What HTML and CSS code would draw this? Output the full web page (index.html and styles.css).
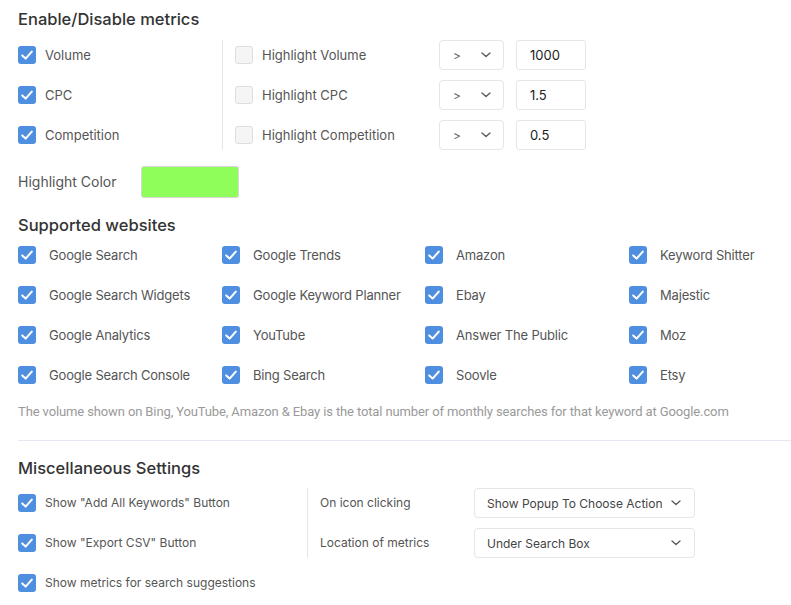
FILE: index.html
```html
<!DOCTYPE html>
<html>
<head>
<meta charset="utf-8">
<link rel="stylesheet" href="styles.css">
</head>
<body>
<div class="page">
  <h2 class="heading">Enable/Disable metrics</h2>
  <div class="metrics">
    <div class="metrics-left">
      <label class="row"><span class="cb on"><svg viewBox="0 0 18 18"><path d="M4.2 9.4 L7.6 12.6 L13.8 5.6"/></svg></span><span class="lbl">Volume</span></label>
      <label class="row"><span class="cb on"><svg viewBox="0 0 18 18"><path d="M4.2 9.4 L7.6 12.6 L13.8 5.6"/></svg></span><span class="lbl">CPC</span></label>
      <label class="row"><span class="cb on"><svg viewBox="0 0 18 18"><path d="M4.2 9.4 L7.6 12.6 L13.8 5.6"/></svg></span><span class="lbl">Competition</span></label>
    </div>
    <div class="metrics-right">
      <div class="hrow">
        <label class="hlabel"><span class="cb off"></span><span class="lbl">Highlight Volume</span></label>
        <div class="sel small"><span>&gt;</span><svg class="chev" viewBox="0 0 10 6"><path d="M1 1 L5 4.6 L9 1"/></svg></div>
        <div class="inp">1000</div>
      </div>
      <div class="hrow">
        <label class="hlabel"><span class="cb off"></span><span class="lbl">Highlight CPC</span></label>
        <div class="sel small"><span>&gt;</span><svg class="chev" viewBox="0 0 10 6"><path d="M1 1 L5 4.6 L9 1"/></svg></div>
        <div class="inp">1.5</div>
      </div>
      <div class="hrow">
        <label class="hlabel"><span class="cb off"></span><span class="lbl">Highlight Competition</span></label>
        <div class="sel small"><span>&gt;</span><svg class="chev" viewBox="0 0 10 6"><path d="M1 1 L5 4.6 L9 1"/></svg></div>
        <div class="inp">0.5</div>
      </div>
    </div>
  </div>
  <div class="color-row">
    <span class="lbl">Highlight Color</span>
    <span class="swatch"></span>
  </div>

  <h2 class="heading h-sites">Supported websites</h2>
  <div class="sites">
    <label class="site"><span class="cb on"><svg viewBox="0 0 18 18"><path d="M4.2 9.4 L7.6 12.6 L13.8 5.6"/></svg></span><span class="lbl">Google Search</span></label>
    <label class="site"><span class="cb on"><svg viewBox="0 0 18 18"><path d="M4.2 9.4 L7.6 12.6 L13.8 5.6"/></svg></span><span class="lbl">Google Trends</span></label>
    <label class="site"><span class="cb on"><svg viewBox="0 0 18 18"><path d="M4.2 9.4 L7.6 12.6 L13.8 5.6"/></svg></span><span class="lbl">Amazon</span></label>
    <label class="site"><span class="cb on"><svg viewBox="0 0 18 18"><path d="M4.2 9.4 L7.6 12.6 L13.8 5.6"/></svg></span><span class="lbl">Keyword Shitter</span></label>
    <label class="site"><span class="cb on"><svg viewBox="0 0 18 18"><path d="M4.2 9.4 L7.6 12.6 L13.8 5.6"/></svg></span><span class="lbl">Google Search Widgets</span></label>
    <label class="site"><span class="cb on"><svg viewBox="0 0 18 18"><path d="M4.2 9.4 L7.6 12.6 L13.8 5.6"/></svg></span><span class="lbl">Google Keyword Planner</span></label>
    <label class="site"><span class="cb on"><svg viewBox="0 0 18 18"><path d="M4.2 9.4 L7.6 12.6 L13.8 5.6"/></svg></span><span class="lbl">Ebay</span></label>
    <label class="site"><span class="cb on"><svg viewBox="0 0 18 18"><path d="M4.2 9.4 L7.6 12.6 L13.8 5.6"/></svg></span><span class="lbl">Majestic</span></label>
    <label class="site"><span class="cb on"><svg viewBox="0 0 18 18"><path d="M4.2 9.4 L7.6 12.6 L13.8 5.6"/></svg></span><span class="lbl">Google Analytics</span></label>
    <label class="site"><span class="cb on"><svg viewBox="0 0 18 18"><path d="M4.2 9.4 L7.6 12.6 L13.8 5.6"/></svg></span><span class="lbl">YouTube</span></label>
    <label class="site"><span class="cb on"><svg viewBox="0 0 18 18"><path d="M4.2 9.4 L7.6 12.6 L13.8 5.6"/></svg></span><span class="lbl">Answer The Public</span></label>
    <label class="site"><span class="cb on"><svg viewBox="0 0 18 18"><path d="M4.2 9.4 L7.6 12.6 L13.8 5.6"/></svg></span><span class="lbl">Moz</span></label>
    <label class="site"><span class="cb on"><svg viewBox="0 0 18 18"><path d="M4.2 9.4 L7.6 12.6 L13.8 5.6"/></svg></span><span class="lbl">Google Search Console</span></label>
    <label class="site"><span class="cb on"><svg viewBox="0 0 18 18"><path d="M4.2 9.4 L7.6 12.6 L13.8 5.6"/></svg></span><span class="lbl">Bing Search</span></label>
    <label class="site"><span class="cb on"><svg viewBox="0 0 18 18"><path d="M4.2 9.4 L7.6 12.6 L13.8 5.6"/></svg></span><span class="lbl">Soovle</span></label>
    <label class="site"><span class="cb on"><svg viewBox="0 0 18 18"><path d="M4.2 9.4 L7.6 12.6 L13.8 5.6"/></svg></span><span class="lbl">Etsy</span></label>
  </div>
  <p class="note">The volume shown on Bing, YouTube, Amazon &amp; Ebay is the total number of monthly searches for that keyword at Google.com</p>
  <hr class="divider">

  <h2 class="heading h-misc">Miscellaneous Settings</h2>
  <div class="misc">
    <div class="misc-left">
      <label class="row"><span class="cb on"><svg viewBox="0 0 18 18"><path d="M4.2 9.4 L7.6 12.6 L13.8 5.6"/></svg></span><span class="lbl">Show "Add All Keywords" Button</span></label>
      <label class="row"><span class="cb on"><svg viewBox="0 0 18 18"><path d="M4.2 9.4 L7.6 12.6 L13.8 5.6"/></svg></span><span class="lbl">Show "Export CSV" Button</span></label>
      <label class="row"><span class="cb on"><svg viewBox="0 0 18 18"><path d="M4.2 9.4 L7.6 12.6 L13.8 5.6"/></svg></span><span class="lbl">Show metrics for search suggestions</span></label>
    </div>
    <div class="misc-right">
      <div class="mrow">
        <span class="lbl mlabel">On icon clicking</span>
        <div class="sel wide"><span>Show Popup To Choose Action</span><svg class="chev" viewBox="0 0 10 6"><path d="M1 1 L5 4.6 L9 1"/></svg></div>
      </div>
      <div class="mrow">
        <span class="lbl mlabel">Location of metrics</span>
        <div class="sel wide"><span>Under Search Box</span><svg class="chev" viewBox="0 0 10 6"><path d="M1 1 L5 4.6 L9 1"/></svg></div>
      </div>
    </div>
  </div>
</div>
</body>
</html>
```

FILE: styles.css
```css
* { box-sizing: border-box; }
html, body { margin: 0; padding: 0; background: #fff; }
body {
  font-family: Inter, "Noto Sans", "Liberation Sans", sans-serif;
  font-size: 13px;
  color: #555;
  overflow: hidden;
}
.page { padding: 8px 0 0 18px; width: 791px; }
.heading {
  margin: 0 0 10px 0;
  font-size: 16.5px;
  line-height: 22px;
  font-weight: 500;
  color: #333;
}
.lbl { line-height: 18px; white-space: nowrap; }

.cb {
  display: inline-flex;
  width: 18px; height: 18px;
  border-radius: 3px;
  flex: none;
}
.cb.on { background: #4f8fe0; }
.cb.off { background: #f5f5f5; border: 1px solid #dedede; }
.cb svg { width: 18px; height: 18px; }
.cb svg path { fill: none; stroke: #fff; stroke-width: 2; stroke-linecap: round; stroke-linejoin: round; }

.metrics { display: flex; }
.metrics-left { width: 204px; display: flex; flex-direction: column; gap: 10px; }
.row { display: flex; align-items: center; gap: 9px; height: 30px; }
.metrics-right {
  border-left: 1px solid #e6e6e9;
  padding-left: 12px;
  display: flex; flex-direction: column; gap: 10px;
}
.hrow { display: flex; align-items: center; height: 30px; }
.hlabel { display: flex; align-items: center; gap: 9px; width: 204px; }

.sel {
  display: flex; align-items: center; justify-content: space-between;
  height: 30px;
  border: 1px solid #e8e4e8;
  border-radius: 4px;
  background: #fff;
  color: #444;
}
.sel.small { width: 65px; padding: 0 12px 0 13px; margin-right: 12px; font-size: 12px; color: #666; }
.sel.wide { width: 221px; padding: 0 13px 0 12px; color: #444; font-size: 12px; }
.chev { width: 10px; height: 6px; }
.chev path { fill: none; stroke: #555; stroke-width: 1.3; stroke-linecap: round; stroke-linejoin: round; }
.inp {
  width: 70px; height: 30px;
  border: 1px solid #e8e4e8;
  border-radius: 3px;
  padding: 0 13px;
  display: flex; align-items: center;
  color: #222;
}

.color-row { display: flex; align-items: center; margin-top: 16px; height: 31px; }
.color-row .lbl { width: 123px; font-size: 14px; }
.swatch {
  width: 98px; height: 32px;
  background: #8ffd5a;
  border: 1px solid #d6d6d6;
  border-radius: 3px;
}

.h-sites { margin-top: 17px; margin-bottom: 4px; }
.sites {
  display: grid;
  grid-template-columns: 204px 203px 204px 1fr;
  row-gap: 10px;
}
.site { display: flex; align-items: center; gap: 13px; height: 30px; }
.site .lbl { letter-spacing: -0.18px; }

.note {
  margin: 14px 0 0 0;
  font-family: Roboto, "Liberation Sans", sans-serif;
  font-size: 13px;
  letter-spacing: -0.12px;
  line-height: 16px;
  color: #9a9a9a;
  white-space: nowrap;
}
.divider {
  margin: 20px 0 0 0;
  border: 0;
  border-top: 1px solid #e8e6f0;
  height: 0;
}
.h-misc { margin-top: 16px; margin-bottom: 9px; font-weight: 500; }

.misc { display: flex; align-items: flex-start; }
.misc-left { width: 289px; display: flex; flex-direction: column; gap: 10px; }
.misc-left .lbl { font-size: 12px; }
.misc-right {
  border-left: 1px solid #e6e6e9;
  padding-left: 12px;
  display: flex; flex-direction: column; gap: 10px;
}
.mrow { display: flex; align-items: center; height: 30px; }
.mlabel { width: 154px; font-size: 12px; }
```
